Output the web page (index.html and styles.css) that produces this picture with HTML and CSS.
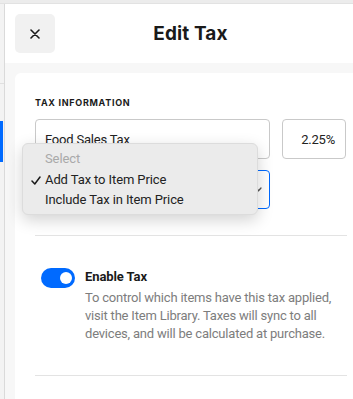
FILE: index.html
```html
<!DOCTYPE html>
<html lang="en">
<head>
    <meta charset="UTF-8">
    <meta name="viewport" content="width=device-width, initial-scale=1.0">
    <title>Edit Tax</title>
    <link rel="stylesheet" href="styles.css">
</head>
<body>
    <div class="topbar"></div>
    <div class="app">
        <aside class="rail">
            <div class="rail-sep"></div>
            <div class="rail-active"></div>
        </aside>

        <main class="sheet">
            <header class="sheet-head">
                <button class="close-btn" aria-label="Close">
                    <svg width="10" height="10" viewBox="0 0 10 10">
                        <path d="M1 1 L9 9 M9 1 L1 9" stroke="#1a1a1a" stroke-width="1.6" stroke-linecap="round"/>
                    </svg>
                </button>
                <h1>Edit Tax</h1>
                <div class="head-spacer"></div>
            </header>

            <div class="sheet-body">
                <section class="card">
                    <h2>Tax Information</h2>

                    <div class="field-row">
                        <div class="field field-name">Food Sales Tax</div>
                        <div class="field field-pct">2.25%</div>
                    </div>

                    <div class="field field-select">
                        <svg class="chevron" width="7" height="5" viewBox="0 0 7 5">
                            <path d="M1 1 L3.5 3.8 L6 1" fill="none" stroke="#555" stroke-width="1.3" stroke-linecap="round"/>
                        </svg>
                    </div>

                    <!-- open native-style menu over the select -->
                    <ul class="menu">
                        <li class="menu-item placeholder">Select</li>
                        <li class="menu-item checked">
                            <svg class="check" width="10" height="9" viewBox="0 0 10 9">
                                <path d="M1 5 L3.8 8 L9 1" fill="none" stroke="#1a1a1a" stroke-width="1.5" stroke-linecap="round" stroke-linejoin="round"/>
                            </svg>
                            Add Tax to Item Price
                        </li>
                        <li class="menu-item">Include Tax in Item Price</li>
                    </ul>

                    <hr class="divider first">

                    <div class="toggle-row">
                        <div class="toggle on"><span class="knob"></span></div>
                        <div class="toggle-text">
                            <h3>Enable Tax</h3>
                            <p>To control which items have this tax applied, visit the Item Library. Taxes will sync to all devices, and will be calculated at purchase.</p>
                        </div>
                    </div>

                    <hr class="divider">
                </section>
            </div>
        </main>
    </div>
</body>
</html>
```

FILE: styles.css
```css
body {
    margin: 0;
    font-family: Roboto, "Liberation Sans", sans-serif;
    color: #1a1a1a;
    background: #f7f7f7;
    overflow: hidden;
    height: 399px;
}

.topbar {
    height: 3px;
    background: #ececec;
    border-bottom: 1px solid #e2e2e2;
}

.app {
    display: flex;
    width: 353px;
    height: 395px;
    overflow: hidden;
}

/* left navigation edge */
.rail {
    position: relative;
    width: 4px;
    flex-shrink: 0;
    background: #f3f3f3;
    border-right: 1px solid #dadada;
}

.rail-sep {
    position: absolute;
    top: 79px;
    left: 0;
    right: 0;
    height: 1px;
    background: #e0e0e0;
}

.rail-active {
    position: absolute;
    top: 117px;
    left: 0;
    width: 3px;
    height: 41px;
    background: #006aff;
}

.sheet {
    width: 371px;
    flex-shrink: 0;
    display: flex;
    flex-direction: column;
}

.sheet-head {
    height: 59px;
    flex-shrink: 0;
    display: flex;
    align-items: center;
    background: #fff;
}

.close-btn {
    width: 40px;
    height: 39px;
    margin-left: 10px;
    border: none;
    border-radius: 5px;
    background: #f1f1f1;
    display: flex;
    align-items: center;
    justify-content: center;
    padding: 0;
}

.head-spacer {
    width: 50px;
}

.sheet-head h1 {
    flex: 1;
    margin: 0;
    text-align: center;
    font-family: Inter, sans-serif;
    font-size: 19px;
    font-weight: 700;
    letter-spacing: 0.1px;
}

.sheet-body {
    flex: 1;
    min-height: 0;
    background: #f7f7f7;
    padding: 10px 0 0 10px;
}

.card {
    position: relative;
    box-sizing: border-box;
    width: 352px;
    height: 100%;
    background: #fff;
    border-radius: 6px 6px 0 0;
    padding: 24px 20px 0 20px;
}

.card h2 {
    margin: 0 0 10px 0;
    font-family: Inter, sans-serif;
    font-size: 9px;
    line-height: 12px;
    font-weight: 700;
    text-transform: uppercase;
    letter-spacing: 0.7px;
}

.field-row {
    display: flex;
    gap: 12px;
}

.field {
    box-sizing: border-box;
    height: 40px;
    border: 1px solid #c9c9c9;
    border-radius: 4px;
    display: flex;
    align-items: center;
    font-size: 13px;
    letter-spacing: -0.2px;
    color: #222;
}

.field-name {
    width: 235px;
    padding-left: 9px;
}

.field-pct {
    width: 64px;
    justify-content: flex-end;
    padding-right: 10px;
}

.field-select {
    width: 235px;
    height: 39px;
    margin-top: 11px;
    border-color: #006aff;
    justify-content: flex-end;
    padding-right: 7px;
}

.menu {
    position: absolute;
    top: 70px;
    left: 7px;
    width: 236px;
    margin: 0;
    padding: 5px 0;
    list-style: none;
    background: #ebebeb;
    border: 1px solid #dcdcdc;
    border-radius: 6px;
    box-shadow: 0 5px 16px rgba(0, 0, 0, 0.18);
    box-sizing: border-box;
    height: 72px;
    z-index: 5;
}

.menu-item {
    position: relative;
    padding-left: 22px;
    font-size: 13px;
    line-height: 20.5px;
    letter-spacing: -0.1px;
    color: #222;
}

.menu-item.placeholder {
    color: #a9a9a9;
}

.check {
    position: absolute;
    left: 8px;
    top: 6px;
}

.divider {
    border: none;
    height: 1px;
    background: #e3e3e3;
    margin: 32px 0 0 0;
}

.divider.first {
    margin-top: 26px;
}

.toggle-row {
    display: flex;
    gap: 10px;
    margin-top: 32px;
    padding-left: 6px;
}

.toggle {
    position: relative;
    width: 34px;
    height: 20px;
    border-radius: 10px;
    background: #006aff;
    flex-shrink: 0;
}

.knob {
    position: absolute;
    right: 3px;
    top: 4px;
    width: 12px;
    height: 12px;
    border-radius: 50%;
    background: #fff;
}

.toggle-text h3 {
    margin: 0 0 3px 0;
    font-size: 13px;
    line-height: 18px;
    font-weight: 700;
    letter-spacing: -0.1px;
}

.toggle-text p {
    margin: 0;
    width: 258px;
    font-size: 13px;
    line-height: 18px;
    letter-spacing: -0.2px;
    color: #7d7d7d;
}
```
